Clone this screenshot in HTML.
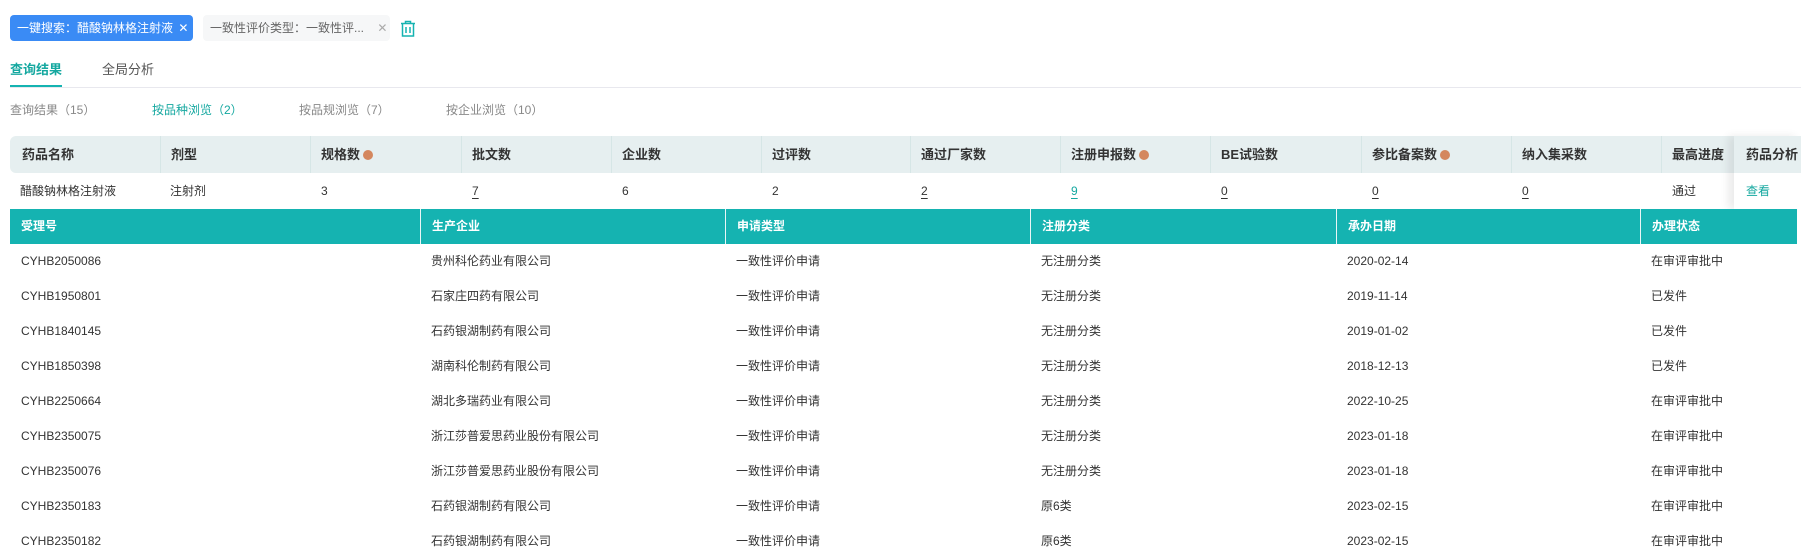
<!DOCTYPE html>
<html><head><meta charset="utf-8"><style>
*{margin:0;padding:0;box-sizing:border-box}
body{width:1801px;height:555px;overflow:hidden;background:#fff;font-family:"Liberation Sans","Noto Sans CJK SC",sans-serif;color:#333;position:relative}
.a{position:absolute;white-space:nowrap}
.tag1{left:10px;top:15px;width:183px;height:26px;background:#3a8bf5;border-radius:4px;color:#fff;font-size:12px;line-height:26px;padding-left:7px}
.tag2{left:203px;top:15px;width:187px;height:26px;background:#f6f7f8;border-radius:4px;color:#666;font-size:12px;line-height:26px;padding-left:7px}
.tabs{top:60px;font-size:13px;line-height:20px}
.sub{top:101px;font-size:12px;line-height:18px;color:#888}
.hdr{left:10px;top:136px;width:1791px;height:37px;background:#e6eff0;border-radius:6px 0 0 6px}
.hc{top:136px;height:37px;line-height:37px;font-size:13px;font-weight:bold;color:#333;padding-left:10px;border-left:1px solid #d6e6e6}
.dc{top:173px;height:36px;line-height:36px;font-size:12px;color:#333;padding-left:10px}
.dot{display:inline-block;width:10px;height:10px;border-radius:50%;background:#d4875e;vertical-align:-1px;margin-left:3px}
u{text-decoration:underline;text-underline-offset:3px}
.th{left:10px;top:209px;width:1787px;height:35px;background:#15b3b1}
.tc{top:209px;height:35px;line-height:35px;color:#fff;font-weight:bold;font-size:12px;padding-left:11px;border-left:1px solid #e8f6f6}
.r{font-size:12px;line-height:35px;height:35px}
.fix{left:1734px;top:136px;width:67px;height:73px;background:#fff;box-shadow:-6px 0 8px rgba(0,0,0,0.08)}
</style></head><body>
<div class="a tag1">一键搜索：醋酸钠林格注射液 <span style="margin-left:2px">✕</span></div>
<div class="a tag2">一致性评价类型：一致性评... <span style="color:#aaa;margin-left:10px">✕</span></div>
<svg class="a" style="left:400px;top:20px" width="16" height="17" viewBox="0 0 16 17" fill="none" stroke="#15b3b1" stroke-width="1.5"><path d="M1 3.5h14M5.5 3.5V1.5h5v2M2.5 3.5v12.5h11V3.5M6 7v6M10 7v6"/></svg>
<div class="a tabs" style="left:10px;color:#15a8a0;font-weight:bold">查询结果</div>
<div class="a tabs" style="left:102px;color:#555">全局分析</div>
<div class="a" style="left:10px;top:85px;width:52px;height:2px;background:#15b3b1"></div>
<div class="a" style="left:10px;top:87px;width:1791px;height:1px;background:#e8e8ee"></div>
<div class="a sub" style="left:10px">查询结果（15）</div>
<div class="a sub" style="left:152px;color:#15a8a0">按品种浏览（2）</div>
<div class="a sub" style="left:299px">按品规浏览（7）</div>
<div class="a sub" style="left:446px">按企业浏览（10）</div>
<div class="a hdr"></div>
<div class="a hc" style="left:10px;border:0;padding-left:12px">药品名称</div>
<div class="a hc" style="left:160px">剂型</div>
<div class="a hc" style="left:310px">规格数<span class="dot"></span></div>
<div class="a hc" style="left:461px">批文数</div>
<div class="a hc" style="left:611px">企业数</div>
<div class="a hc" style="left:761px">过评数</div>
<div class="a hc" style="left:910px">通过厂家数</div>
<div class="a hc" style="left:1060px">注册申报数<span class="dot"></span></div>
<div class="a hc" style="left:1210px">BE试验数</div>
<div class="a hc" style="left:1361px">参比备案数<span class="dot"></span></div>
<div class="a hc" style="left:1511px">纳入集采数</div>
<div class="a hc" style="left:1661px">最高进度</div>
<div class="a dc" style="left:10px">醋酸钠林格注射液</div>
<div class="a dc" style="left:160px">注射剂</div>
<div class="a dc" style="left:311px">3</div>
<div class="a dc" style="left:462px"><u>7</u></div>
<div class="a dc" style="left:612px">6</div>
<div class="a dc" style="left:762px">2</div>
<div class="a dc" style="left:911px"><u>2</u></div>
<div class="a dc" style="left:1061px;color:#15a8a0"><u>9</u></div>
<div class="a dc" style="left:1211px"><u>0</u></div>
<div class="a dc" style="left:1362px"><u>0</u></div>
<div class="a dc" style="left:1512px"><u>0</u></div>
<div class="a dc" style="left:1662px">通过</div>
<div class="a fix"><div style="height:37px;line-height:37px;background:#e6eff0;font-size:13px;font-weight:bold;padding-left:12px">药品分析</div><div style="height:36px;line-height:36px;font-size:12px;color:#15a8a0;padding-left:12px">查看</div></div>
<div class="a th"></div>
<div class="a tc" style="left:10px;border:0">受理号</div>
<div class="a tc" style="left:420px">生产企业</div>
<div class="a tc" style="left:725px">申请类型</div>
<div class="a tc" style="left:1030px">注册分类</div>
<div class="a tc" style="left:1336px">承办日期</div>
<div class="a tc" style="left:1640px">办理状态</div>
<div id="rows"></div>
<div class="a r" style="left:21px;top:244px">CYHB2050086<br>CYHB1950801<br>CYHB1840145<br>CYHB1850398<br>CYHB2250664<br>CYHB2350075<br>CYHB2350076<br>CYHB2350183<br>CYHB2350182</div>
<div class="a r" style="left:431px;top:244px">贵州科伦药业有限公司<br>石家庄四药有限公司<br>石药银湖制药有限公司<br>湖南科伦制药有限公司<br>湖北多瑞药业有限公司<br>浙江莎普爱思药业股份有限公司<br>浙江莎普爱思药业股份有限公司<br>石药银湖制药有限公司<br>石药银湖制药有限公司</div>
<div class="a r" style="left:736px;top:244px">一致性评价申请<br>一致性评价申请<br>一致性评价申请<br>一致性评价申请<br>一致性评价申请<br>一致性评价申请<br>一致性评价申请<br>一致性评价申请<br>一致性评价申请</div>
<div class="a r" style="left:1041px;top:244px">无注册分类<br>无注册分类<br>无注册分类<br>无注册分类<br>无注册分类<br>无注册分类<br>无注册分类<br>原6类<br>原6类</div>
<div class="a r" style="left:1347px;top:244px">2020-02-14<br>2019-11-14<br>2019-01-02<br>2018-12-13<br>2022-10-25<br>2023-01-18<br>2023-01-18<br>2023-02-15<br>2023-02-15</div>
<div class="a r" style="left:1651px;top:244px">在审评审批中<br>已发件<br>已发件<br>已发件<br>在审评审批中<br>在审评审批中<br>在审评审批中<br>在审评审批中<br>在审评审批中</div>
</body></html>
